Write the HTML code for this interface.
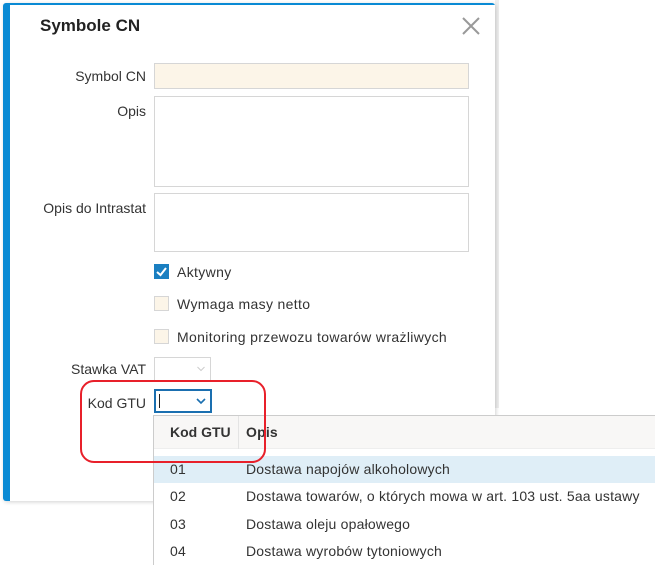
<!DOCTYPE html>
<html><head><meta charset="utf-8"><style>
*{box-sizing:border-box;margin:0;padding:0}
body{width:655px;height:565px;overflow:hidden;background:#fff;font-family:"Liberation Sans",Arial,sans-serif;position:relative;color:#222}
.abs{position:absolute}
.lbl{position:absolute;font-size:14px;color:#333;text-align:right;right:509px;white-space:nowrap}
.inp{position:absolute;border:1px solid #d6d6d6;background:#fff}
.cb{position:absolute;left:154px;width:15px;height:15px;border:1px solid #d6d6d6;background:#fcf5e8}
.cbt{position:absolute;left:177px;font-size:14px;color:#333;letter-spacing:0.35px;white-space:nowrap}
.t{position:absolute;font-size:14px;color:#333;letter-spacing:0.2px;white-space:nowrap}
</style></head><body>
<div class="abs" style="left:495px;top:0;width:4px;height:408px;background:#eee"></div>
<!-- dialog -->
<div class="abs" style="left:3px;top:3px;width:492px;height:498px;background:#0a8ad4;border-radius:3px;box-shadow:1px 1px 4px rgba(0,0,0,.18)"></div>
<div class="abs" style="left:10px;top:5px;width:485px;height:496px;background:#fff"></div>
<div class="abs" style="left:40px;top:16px;font-size:17px;font-weight:bold;color:#222">Symbole CN</div>
<svg class="abs" style="left:462px;top:17px" width="18" height="18"><path d="M1 1L17 17M17 1L1 17" stroke="#999" stroke-width="2"/></svg>
<div class="lbl" style="top:68px">Symbol CN</div>
<div class="inp" style="left:154px;top:63px;width:315px;height:26px;background:#fcf5e8"></div>
<div class="lbl" style="top:103px">Opis</div>
<div class="inp" style="left:154px;top:96px;width:315px;height:91px"></div>
<div class="lbl" style="top:200px">Opis do Intrastat</div>
<div class="inp" style="left:154px;top:193px;width:315px;height:59px"></div>
<div class="cb" style="top:264px;background:#1a7fc1;border-color:#1a7fc1"><svg width="13" height="13" style="position:absolute;left:0;top:0"><path d="M2 7L5.5 10L11 3" stroke="#fff" stroke-width="2" fill="none"/></svg></div>
<div class="cbt" style="top:264px">Aktywny</div>
<div class="cb" style="top:296px"></div>
<div class="cbt" style="top:296px">Wymaga masy netto</div>
<div class="cb" style="top:329px"></div>
<div class="cbt" style="top:329px">Monitoring przewozu towarów wrażliwych</div>
<div class="lbl" style="top:361px">Stawka VAT</div>
<div class="inp" style="left:154px;top:357px;width:57px;height:24px"></div>
<svg class="abs" style="left:197px;top:366px" width="8" height="6"><path d="M0.5 1L4 4.5L7.5 1" stroke="#ccc" fill="none"/></svg>
<div class="lbl" style="top:395px">Kod GTU</div>
<div class="inp" style="left:154px;top:389px;width:58px;height:24px;border:2px solid #1a6fb0"></div>
<div class="abs" style="left:159px;top:394px;width:1px;height:14px;background:#222"></div>
<svg class="abs" style="left:196px;top:398px" width="10" height="7"><path d="M1 1L5 5L9 1" stroke="#1a6fb0" stroke-width="1.6" fill="none"/></svg>
<!-- popup -->
<div class="abs" style="left:153px;top:415px;width:502px;height:150px;background:#fff;border-left:1px solid #ccc;border-top:1px solid #ccc"></div>
<div class="abs" style="left:154px;top:416px;width:501px;height:33px;background:#f8f7f6;border-bottom:1px solid #eee"></div>
<div class="abs" style="left:238px;top:416px;width:1px;height:33px;background:#e4e4e4"></div>
<div class="t" style="left:170px;top:424px;font-weight:bold;letter-spacing:0">Kod GTU</div>
<div class="t" style="left:246px;top:424px;font-weight:bold">Opis</div>
<div class="abs" style="left:154px;top:456px;width:501px;height:27px;background:#dfeef7"></div>
<div class="t" style="left:170px;top:461px">01</div><div class="t" style="left:246px;top:461px">Dostawa napojów alkoholowych</div>
<div class="t" style="left:170px;top:488px">02</div><div class="t" style="left:246px;top:488px">Dostawa towarów, o których mowa w art. 103 ust. 5aa ustawy</div>
<div class="t" style="left:170px;top:516px">03</div><div class="t" style="left:246px;top:516px">Dostawa oleju opałowego</div>
<div class="t" style="left:170px;top:543px">04</div><div class="t" style="left:246px;top:543px">Dostawa wyrobów tytoniowych</div>
<!-- red highlight -->
<div class="abs" style="left:80px;top:380px;width:186px;height:83px;border:2px solid #e8202a;border-radius:14px"></div>
</body></html>
